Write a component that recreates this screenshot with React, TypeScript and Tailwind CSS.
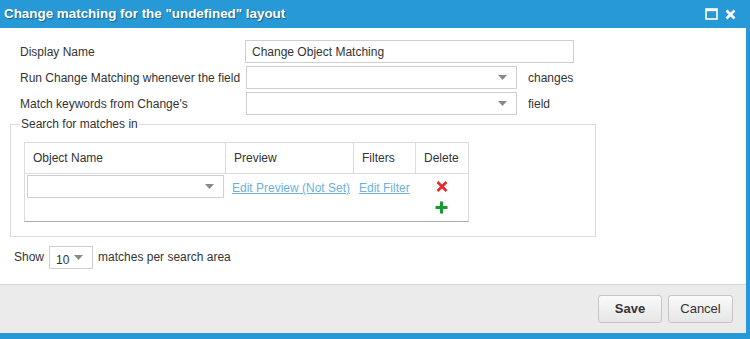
import React from 'react';

const font = { fontFamily: '"Liberation Sans", Arial, sans-serif' };

function Caret() {
  return (
    <svg width="9" height="5" viewBox="0 0 9 5" className="shrink-0">
      <path d="M0 0 H9 L4.5 5 Z" fill="#8a8a8a" />
    </svg>
  );
}

function Select({ className, value }: { className: string; value?: string }) {
  return (
    <div
      className={`flex items-center justify-between border border-[#cfcfcf] bg-white h-[23px] pl-[6px] pr-[9px] ${className}`}>
      <span className="text-[12px] text-[#333] pt-[4px]">{value}</span>
      <Caret />
    </div>
  );
}

function Field({ label, children }: { label: string; children: React.ReactNode }) {
  return (
    <div className="flex items-center">
      <div className="w-[226px] text-[12px] text-[#333]">{label}</div>
      {children}
    </div>
  );
}

export default function App() {
  return (
    <div className="w-[750px] h-[339px] bg-[#2899d7] flex flex-col" style={font}>
      {/* Title bar */}
      <div className="h-[28px] flex items-center justify-between pl-[4px] pr-[14px]">
        <span
          className="text-white font-bold text-[13.4px] leading-none"
          style={{ textShadow: '1px 1px 1px rgba(0,0,0,0.35)' }}>
          Change matching for the "undefined" layout
        </span>
        <div className="flex items-center gap-[7px]">
          <svg width="13" height="12" viewBox="0 0 13 12">
            <rect x="1" y="1" width="11" height="10" fill="none" stroke="#fff" strokeWidth="1.6" />
            <rect x="1" y="1" width="11" height="2.2" fill="#fff" />
          </svg>
          <svg width="11" height="11" viewBox="0 0 11 11">
            <path d="M1.5 1.5 L9.5 9.5 M9.5 1.5 L1.5 9.5" stroke="#fff" strokeWidth="2.6" />
          </svg>
        </div>
      </div>

      {/* Body */}
      <div className="mr-[4px] bg-white flex flex-col">
        <div className="h-[256px] pt-[12px] text-[#333] text-[12px]">
          <div className="pl-[20px] flex flex-col gap-[3px]">
            <Field label="Display Name">
              <div className="w-[329px] h-[23px] border border-[#cfcfcf] -ml-[1px] px-[6px] flex items-center">
                Change Object Matching
              </div>
            </Field>
            <Field label="Run Change Matching whenever the field">
              <Select className="w-[271px]" />
              <span className="ml-[11px]">changes</span>
            </Field>
            <Field label="Match keywords from Change's">
              <Select className="w-[271px]" />
              <span className="ml-[11px]">field</span>
            </Field>
          </div>

          <fieldset className="ml-[10px] mt-[2px] w-[586px] border border-[#dcdcdc] pl-[9px] pb-[14px]">
            <legend className="px-[1px] leading-[14px]">Search for matches in</legend>
            <div className="ml-[4px] mt-[11px] w-[445px] border border-[#dcdcdc] border-b-[#aaaaaa]">
              <div className="grid grid-cols-[201px_128px_62px_52px] h-[31px] border-b border-[#dcdcdc]">
                <div className="pl-[8px] flex items-center border-r border-[#dcdcdc]">Object Name</div>
                <div className="pl-[8px] flex items-center border-r border-[#dcdcdc]">Preview</div>
                <div className="pl-[8px] flex items-center border-r border-[#dcdcdc]">Filters</div>
                <div className="pl-[8px] flex items-center">Delete</div>
              </div>
              <div className="grid grid-cols-[201px_128px_62px_52px] h-[47px]">
                <div className="pl-[2px] pt-[1px]">
                  <Select className="w-[197px]" />
                </div>
                <div className="pl-[6px] pt-[5px]">
                  <a className="text-[#6cb2dc] underline">Edit Preview (Not Set)</a>
                </div>
                <div className="pl-[5px] pt-[5px]">
                  <a className="text-[#6cb2dc] underline">Edit Filter</a>
                </div>
                <div className="flex flex-col items-center pt-[7px] gap-[9px] pr-[1px]">
                  <svg width="12" height="11" viewBox="0 0 12 11">
                    <path d="M1.5 1 L10.5 10 M10.5 1 L1.5 10" stroke="#e8262b" strokeWidth="2.6" />
                  </svg>
                  <svg width="13" height="13" viewBox="0 0 13 13">
                    <path d="M6.5 0.5 V12.5 M0.5 6.5 H12.5" stroke="#1a9a2c" strokeWidth="3" />
                  </svg>
                </div>
              </div>
            </div>
          </fieldset>

          <div className="flex items-center pl-[14px] mt-[9px]">
            <span className="-mt-[2px]">Show</span>
            <Select className="w-[44px] ml-[5px]" value="10" />
            <span className="ml-[5px] -mt-[2px]">matches per search area</span>
          </div>
        </div>

        {/* Footer */}
        <div className="h-[49px] bg-[#ebebeb] border-t border-[#d6d6d6] flex items-start justify-end pt-[10px] pr-[13px] gap-[6px]">
          <button
            className="w-[64px] h-[28px] rounded-[3px] border border-[#c6c6c6] text-[13px] font-bold text-[#333]"
            style={{ background: 'linear-gradient(#fafafa, #e6e6e6)' }}>
            Save
          </button>
          <button
            className="w-[65px] h-[28px] rounded-[3px] border border-[#c6c6c6] text-[13px] text-[#333]"
            style={{ background: 'linear-gradient(#fafafa, #e6e6e6)' }}>
            Cancel
          </button>
        </div>
      </div>
    </div>
  );
}
